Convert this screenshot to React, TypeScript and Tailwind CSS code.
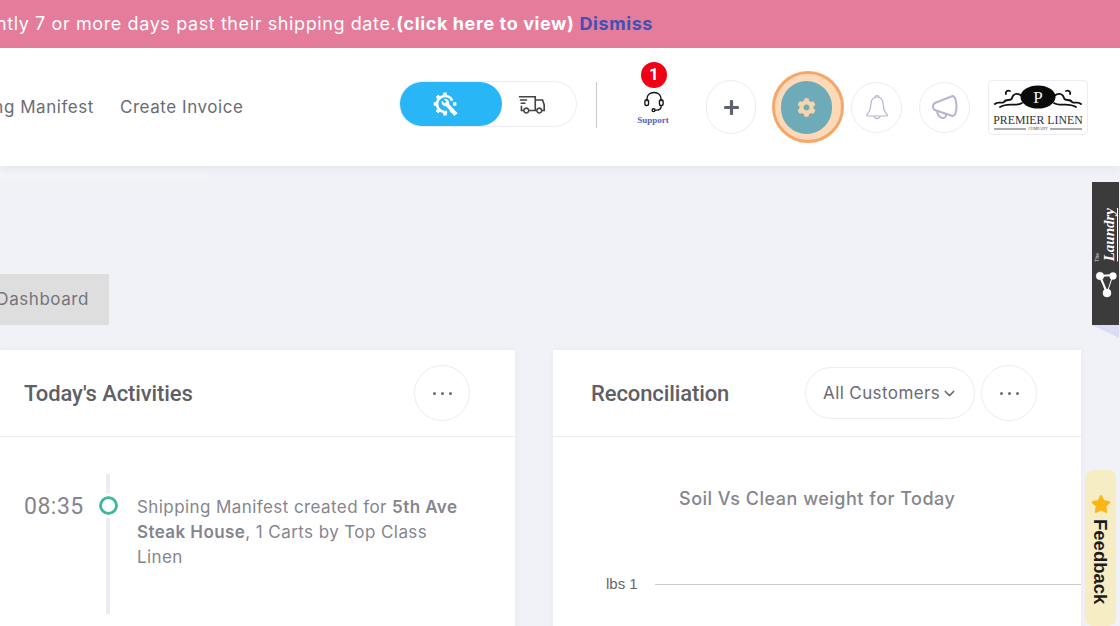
import React from "react";
import { FaStar, FaCog, FaPlus } from "react-icons/fa";
import { LiaShippingFastSolid } from "react-icons/lia";
import { LuChevronDown } from "react-icons/lu";

const poppins = "[font-family:Inter,'Noto_Sans',sans-serif]";

function GearWrench() {
  const teeth = [0, 45, 90, 135, 180, 225, 270, 315];
  return (
    <svg width="26" height="27" viewBox="0 0 26 27" fill="none" stroke="white">
      <circle cx="12" cy="13" r="8" strokeWidth="2.6" strokeDasharray="36 14" transform="rotate(75 12 13)" />
      {teeth.map((a) => (
        a === 45 ? null : <rect key={a} x="10.2" y="1.6" width="3.6" height="3.4" rx="0.6" fill="white" stroke="none" transform={`rotate(${a} 12 13)`} />
      ))}
      <path d="M9 9.5 A4.4 4.4 0 0 0 13.4 15.6 L21.4 25 L24.6 22.2 L16.2 13.2 A4.4 4.4 0 0 0 10.8 8 L13.4 10.8 L11.4 12.4 Z" fill="white" stroke="none" />
    </svg>
  );
}

function Headset() {
  return (
    <svg width="20" height="22" viewBox="0 0 22 23" fill="none" stroke="#111" strokeWidth="1.5" strokeLinecap="round">
      <path d="M3.2 10 V8.5 C3.2 4 6.5 1 11 1 C15.5 1 18.8 4 18.8 8.5 V10" />
      <rect x="1" y="9" width="4" height="6.5" rx="2" />
      <rect x="17" y="9" width="4" height="6.5" rx="2" />
      <path d="M19 15.5 C19 18.5 16.5 20.5 12.5 20.5" />
      <circle cx="10.5" cy="20.5" r="1.6" />
    </svg>
  );
}

function Bell() {
  return (
    <svg width="24" height="26" viewBox="0 0 24 26" fill="none" stroke="#b5b5d3" strokeWidth="1.2" strokeLinejoin="round">
      <path d="M10 3.6 C10 0.8 14 0.8 14 3.6" />
      <path d="M12 3 C7.5 3 6 6.5 5.8 10.5 C5.6 14.5 4.8 18 1.6 21 C1.4 21.6 1.8 22 2.4 22 H21.6 C22.2 22 22.6 21.6 22.4 21 C19.2 18 18.4 14.5 18.2 10.5 C18 6.5 16.5 3 12 3 Z" />
      <path d="M9 22 C9.4 25.4 14.6 25.4 15 22" />
    </svg>
  );
}

function Megaphone() {
  return (
    <svg width="28" height="28" viewBox="0 0 28 28" fill="none" stroke="#b5b5d3" strokeWidth="2" strokeLinejoin="round" strokeLinecap="round">
      <path d="M5 9.5 L21 3.2 C23.5 2.4 25.5 7 25.5 13 C25.5 19 24 23.5 21.5 23 L5 17.5 C3 16.8 2 15.2 2 13.4 C2 11.6 3.2 10.2 5 9.5 Z" />
      <path d="M6.5 17.8 C6 20 7.2 22.8 9.6 24.4 C11.6 25.6 14 25 14.8 23.4 C15.2 22.6 15 21.4 14.4 20.6" />
    </svg>
  );
}

function ShareNodes() {
  return (
    <svg width="22" height="30" viewBox="0 0 22 30" fill="white" stroke="white">
      <path d="M5 7 L18 6" fill="none" strokeWidth="2" />
      <path d="M5 7 L12 24" fill="none" strokeWidth="2" />
      <path d="M18 6 L12 24" fill="none" strokeWidth="1" />
      <circle cx="5" cy="7" r="3.8" strokeWidth="0.5" />
      <circle cx="18" cy="7" r="3.4" strokeWidth="0.5" />
      <circle cx="12" cy="24" r="4" strokeWidth="0.5" />
    </svg>
  );
}

function Logo() {
  return (
    <div className="w-[100px] h-[55px] rounded-[4px] border border-[#ececf2] bg-white flex flex-col items-center overflow-hidden">
      <svg width="92" height="29" viewBox="0 0 92 29" className="mt-[3px]">
        <g fill="none" stroke="#111" strokeWidth="1.8" strokeLinecap="round">
          <path d="M30 12 C25 8 21 10 20 14 C19 18 14 14 12 18 C9 20 6 17 3 20" />
          <path d="M30 19 C24 23 16 18 8 23" />
          <path d="M18 7 C15 6 13 8 14 10" />
          <path d="M62 12 C67 8 71 10 72 14 C73 18 78 14 80 18 C83 20 86 17 89 20" />
          <path d="M62 19 C68 23 76 18 84 23" />
          <path d="M74 7 C77 6 79 8 78 10" />
        </g>
        <ellipse cx="46" cy="13" rx="17.5" ry="11.5" fill="#0a0a0a" />
        <text x="46" y="19" textAnchor="middle" fontSize="17" fill="#f3f3f3" fontFamily="'Liberation Serif',serif">P</text>
      </svg>
      <span className="block text-[11.8px] leading-[12px] mt-[1px] text-[#333] [font-family:'Liberation_Serif',serif] whitespace-nowrap">PREMIER LINEN</span>
      <div className="flex items-center gap-[2px] w-[88px] mt-[1px]">
        <div className="h-[2px] flex-1 bg-[#aaa]" />
        <span className="text-[4px] leading-[4px] text-[#444] [font-family:'Liberation_Serif',serif]">COMPANY</span>
        <div className="h-[2px] flex-1 bg-[#aaa]" />
      </div>
    </div>
  );
}

function Round({ children, cls }: { children: React.ReactNode; cls: string }) {
  return <div className={`rounded-full border border-[#ececf2] bg-white flex items-center justify-center shrink-0 ${cls}`}>{children}</div>;
}

function Dots() {
  return (
    <div className="flex gap-[5px]">
      <div className="w-[3px] h-[3px] rounded-full bg-[#6b6b76]" />
      <div className="w-[3px] h-[3px] rounded-full bg-[#6b6b76]" />
      <div className="w-[3px] h-[3px] rounded-full bg-[#6b6b76]" />
    </div>
  );
}

export default function App() {
  return (
    <div className={`relative w-[1120px] h-[626px] overflow-hidden bg-[#f1f2f7] flex flex-col ${poppins}`}>
      <div className="h-[48px] shrink-0 bg-[#e57c9b] flex items-center text-[18px] tracking-[0.6px] text-white whitespace-nowrap">
        <div className="ml-[-52px] mb-[1px] flex items-center">
          <span>currently 7 or more days past their shipping date.</span>
          <span className="font-bold">(click here to view)</span>
          <span className="font-bold text-[#3f51b5] ml-[5px]">Dismiss</span>
        </div>
      </div>

      <div className="h-[118px] shrink-0 bg-white shadow-[0_2px_10px_rgba(0,0,0,0.06)] flex items-center z-10">
        <div className="flex items-center gap-[26px] ml-[-60px] w-[407px] text-[17px] tracking-[0.55px] text-[#6b6b76] whitespace-nowrap mt-[1px]">
          <span>Shipping Manifest</span>
          <span>Create Invoice</span>
        </div>
        <div className="ml-[52px] mb-[6px] w-[178px] h-[46px] rounded-full border border-[#ececf2] flex items-center relative">
          <div className="w-[102px] h-[44px] rounded-full bg-[#29b6f6] flex items-center justify-center pr-[10px]">
            <GearWrench />
          </div>
          <div className="w-[56px] flex justify-center ml-[2px] text-[#444]"><LiaShippingFastSolid size={26} /></div>
        </div>
        <div className="ml-[19px] mb-[5px] w-px h-[46px] bg-[#c9c9cf]" />
        <div className="ml-[40px] w-[32px] flex flex-col items-center self-start mt-[14px]">
          <div className="ml-[2px] w-[26px] h-[26px] rounded-full bg-[#f00012] text-white text-[17px] font-bold flex items-center justify-center [font-family:Roboto,sans-serif]">1</div>
          <div className="mt-[3px] ml-[2px]"><Headset /></div>
          <span className="text-[9px] leading-[11px] tracking-normal font-bold text-[#5763b8] [font-family:'Liberation_Serif',serif] mt-[2px]">Support</span>
        </div>
        <Round cls="ml-[37px] w-[50px] h-[54px]">
          <FaPlus size={17} className="text-[#5f6270]" />
        </Round>
        <div className="ml-[16px] w-[72px] h-[72px] rounded-full bg-[#fcd9b9] border-[3px] border-[#f5a768] flex items-center justify-center shrink-0">
          <div className="w-[51px] h-[53px] rounded-full bg-[#6eabb8] flex items-center justify-center mr-[3px]">
            <FaCog size={19} className="text-[#f6d4ae]" />
          </div>
        </div>
        <Round cls="ml-[7px] w-[51px] h-[51px]">
          <Bell />
        </Round>
        <Round cls="ml-[17px] w-[51px] h-[51px]">
          <Megaphone />
        </Round>
        <div className="ml-[18px]"><Logo /></div>
      </div>

      <div className="flex-1 relative">
        <div className="h-[8px] w-[208px] bg-[#f3f4f8] mt-[6px]" />
        <div className="mt-[94px] w-[109px] h-[51px] bg-[#dedede] flex items-center justify-end pr-[20px] text-[17px] tracking-[0.55px] text-[#74747e] overflow-hidden">
          <span className="whitespace-nowrap">Dashboard</span>
        </div>
        <div className="mt-[25px] flex gap-[38px] h-[300px]">
          <div className="w-[515px] shrink-0 bg-white shadow-[0_0_8px_rgba(0,0,0,0.04)]">
            <div className="h-[87px] border-b border-[#ebedf2] flex items-center justify-between pl-[24px] pr-[45px]">
              <h2 className="text-[22px] font-medium tracking-[-0.1px] text-[#5f5f68] [font-family:Roboto,sans-serif]">Today's Activities</h2>
              <Round cls="w-[56px] h-[56px]"><Dots /></Round>
            </div>
            <div className="flex pt-[37px] pl-[24px]">
              <span className="text-[23px] tracking-[0.5px] leading-[66px] h-[66px] text-[#85858f] w-[74px] shrink-0 [font-family:Roboto,sans-serif]">08:35</span>
              <div className="relative w-[20px] h-[140px] flex justify-center shrink-0">
                <div className="w-[4px] h-[140px] bg-[#ebedf5]" />
                <div className="absolute top-[22px] w-[19px] h-[19px] rounded-full border-[3px] border-[#3fb89f] bg-white outline-[3px] outline-solid outline-white" />
              </div>
              <p className="ml-[19px] w-[326px] text-[17px] tracking-[0.42px] leading-[25px] text-[#85858f] pt-[21px]">
                Shipping Manifest created for <b className="font-semibold">5th Ave Steak House</b>, 1 Carts by Top Class Linen
              </p>
            </div>
          </div>
          <div className="w-[528px] shrink-0 bg-white shadow-[0_0_8px_rgba(0,0,0,0.04)] relative">
            <div className="h-[87px] border-b border-[#ebedf2] flex items-center pl-[38px] pr-[44px]">
              <h2 className="text-[22px] font-medium tracking-[-0.1px] text-[#5f5f68] [font-family:Roboto,sans-serif]">Reconciliation</h2>
              <div className="ml-auto w-[170px] h-[52px] rounded-full border border-[#ececf2] flex items-center pl-[17px] pt-[1px] text-[17px] tracking-[0.4px] text-[#6b6b76] whitespace-nowrap">
                All Customers <LuChevronDown size={17} className="ml-[1px]" />
              </div>
              <Round cls="ml-[6px] w-[56px] h-[56px]"><Dots /></Round>
            </div>
            <div className="pl-[126px] pt-[48px] text-[18px] tracking-[0.5px] font-medium text-[#85858f] whitespace-nowrap">Soil Vs Clean weight for Today</div>
            <div className="flex items-center mt-[61px] ml-[53px]">
              <span className="text-[15px] text-[#666] [font-family:'Liberation_Sans',sans-serif] whitespace-nowrap">lbs 1</span>
              <div className="h-px flex-1 bg-[#ccc] ml-[17px]" />
            </div>
          </div>
        </div>
      </div>

      <div className="absolute left-[1092px] top-[182px] w-[27px] h-[143px] bg-[#3b3b3b] flex flex-col items-center pt-[26px]">
        <div className="flex items-end gap-[1px]">
          <span className="[writing-mode:vertical-rl] rotate-180 text-[5px] leading-[6px] text-[#ddd] [font-family:'Liberation_Sans',sans-serif]">The</span>
          <span className="[writing-mode:vertical-rl] rotate-180 text-[15px] leading-[16px] font-bold italic text-white [font-family:'Liberation_Serif',serif] underline">Laundry</span>
        </div>
        <div className="mt-[8px]"><ShareNodes /></div>
      </div>
      <div className="absolute left-[1092px] top-[325px] w-[27px] h-[13px] bg-[#dcdcf6] [clip-path:polygon(0_0,100%_0,100%_100%)]" />

      <div className="absolute left-[1085px] top-[470px] w-[31px] h-[156px] rounded-[8px] bg-[#f6edc4] flex flex-col items-center pt-[24px]">
        <FaStar size={20} className="text-[#fbb516]" />
        <span className="[writing-mode:vertical-rl] text-[18.5px] leading-[20px] font-bold text-[#1c1c1c] mt-[5px] mr-[2px] [font-family:'Liberation_Sans',sans-serif]">Feedback</span>
      </div>
    </div>
  );
}
